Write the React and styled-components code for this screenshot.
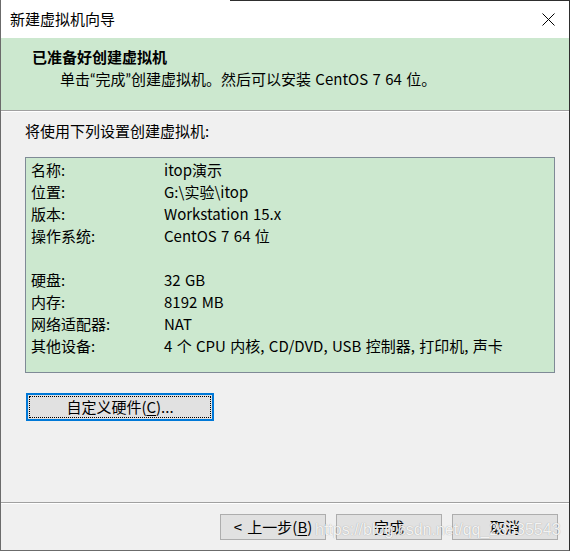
import React from 'react';
import styled, { createGlobalStyle } from 'styled-components';

const GlobalStyle = createGlobalStyle`
  html, body {
    margin: 0;
    padding: 0;
    background: #f0f0f0;
  }
  body {
    font-family: "Noto Sans CJK SC", "Noto Sans", sans-serif;
    font-size: 15px;
    color: #000;
  }
`;

const Window = styled.div`
  position: relative;
  width: 570px;
  height: 551px;
  box-sizing: border-box;
  display: flex;
  flex-direction: column;
  background: #f0f0f0;
  border-left: 1px solid #6b6b6b;
  border-right: 1px solid #2e2e2e;
  border-bottom: 1px solid #6b6b6b;
  overflow: hidden;

  /* edge of the window behind, visible along the top */
  &::before {
    content: '';
    position: absolute;
    top: 0;
    left: 229px;
    right: 0;
    height: 1px;
    background: #2e2e2e;
  }
`;

const TitleBar = styled.div`
  height: 38px;
  flex: none;
  background: #fff;
  display: flex;
  align-items: center;
  justify-content: space-between;
  padding: 0 14px 0 9px;
  line-height: 22px;
`;

const CloseButton = styled.div`
  width: 13px;
  height: 13px;
  display: flex;
`;

const Header = styled.div`
  flex: none;
  background: #cce8cf;
  padding: 8px 0 20px 31px;
  border-bottom: 1px solid #a0a0a0;
  line-height: 22px;
`;

const HeaderTitle = styled.div`
  font-weight: bold;
`;

const HeaderText = styled.div`
  padding-left: 28px;
  word-spacing: 1px;
`;

const Quote = styled.span`
  font-family: Lato, "Liberation Sans", sans-serif;
`;

const Body = styled.div`
  flex: 1;
  border-top: 1px solid #fff;
  padding: 8px 14px 0 24px;
  display: flex;
  flex-direction: column;
  align-items: flex-start;
  line-height: 22px;
`;

const ListBox = styled.div`
  align-self: stretch;
  margin-top: 15px;
  background: #cce8cf;
  border: 1px solid #7f8a96;
  padding: 1px 0 15px 5px;
  display: grid;
  grid-template-columns: 133px 1fr;
  grid-auto-rows: 22px;
  word-spacing: 1px;
`;

const Blank = styled.div`
  grid-column: 1 / -1;
`;

const FocusButton = styled.button`
  position: relative;
  margin: 20px 0 0 1px;
  width: 188px;
  height: 28px;
  padding: 0;
  background: #e1e1e1;
  border: 2px solid #0078d7;
  font: inherit;
  color: #000;
  line-height: 22px;

  &::after {
    content: '';
    position: absolute;
    inset: 1px;
    border: 1px dotted #000;
  }
`;

const Key = styled.span`
  text-decoration: underline;
  text-underline-offset: 2px;
`;

const Footer = styled.div`
  flex: none;
  border-top: 1px solid #a0a0a0;
  box-shadow: inset 0 1px 0 #fff;
  padding: 11px 11px 10px;
  display: flex;
  justify-content: flex-end;
  gap: 10px;
`;

const Button = styled.button`
  width: 106px;
  height: 26px;
  padding: 0;
  background: #e1e1e1;
  border: 1px solid #adadad;
  font: inherit;
  color: #000;
  line-height: 22px;
  word-spacing: 2px;
`;

const Watermark = styled.div`
  position: absolute;
  left: 314px;
  top: 521px;
  font-family: "Liberation Sans", Arial, sans-serif;
  font-size: 16px;
  line-height: 18px;
  color: rgba(252, 252, 252, 0.92);
  text-shadow: 0 0 1px rgba(0, 0, 0, 0.35);
  pointer-events: none;
  white-space: nowrap;
`;

const settings = [
  ['名称:', 'itop演示'],
  ['位置:', 'G:\\实验\\itop'],
  ['版本:', 'Workstation 15.x'],
  ['操作系统:', 'CentOS 7 64 位'],
  null,
  ['硬盘:', '32 GB'],
  ['内存:', '8192 MB'],
  ['网络适配器:', 'NAT'],
  ['其他设备:', '4 个 CPU 内核, CD/DVD, USB 控制器, 打印机, 声卡'],
];

export default function App() {
  return (
    <>
      <GlobalStyle />
      <Window>
        <TitleBar>
          <span>新建虚拟机向导</span>
          <CloseButton>
            <svg width="13" height="13" viewBox="0 0 13 13">
              <path d="M0.5 0.5 L12.5 12.5 M12.5 0.5 L0.5 12.5" stroke="#000" strokeWidth="1" fill="none" />
            </svg>
          </CloseButton>
        </TitleBar>

        <Header>
          <HeaderTitle>已准备好创建虚拟机</HeaderTitle>
          <HeaderText>
            单击<Quote>“</Quote>完成<Quote>”</Quote>创建虚拟机。然后可以安装 CentOS 7 64 位。
          </HeaderText>
        </Header>

        <Body>
          <div>将使用下列设置创建虚拟机:</div>
          <ListBox>
            {settings.map((row, i) =>
              row ? (
                <React.Fragment key={i}>
                  <div>{row[0]}</div>
                  <div>{row[1]}</div>
                </React.Fragment>
              ) : (
                <Blank key={i} />
              )
            )}
          </ListBox>
          <FocusButton>
            自定义硬件(<Key>C</Key>)...
          </FocusButton>
        </Body>

        <Footer>
          <Button>&lt; 上一步(<Key>B</Key>)</Button>
          <Button>完成</Button>
          <Button>取消</Button>
        </Footer>

        <Watermark>https://blog.csdn.net/qq_28335543</Watermark>
      </Window>
    </>
  );
}
